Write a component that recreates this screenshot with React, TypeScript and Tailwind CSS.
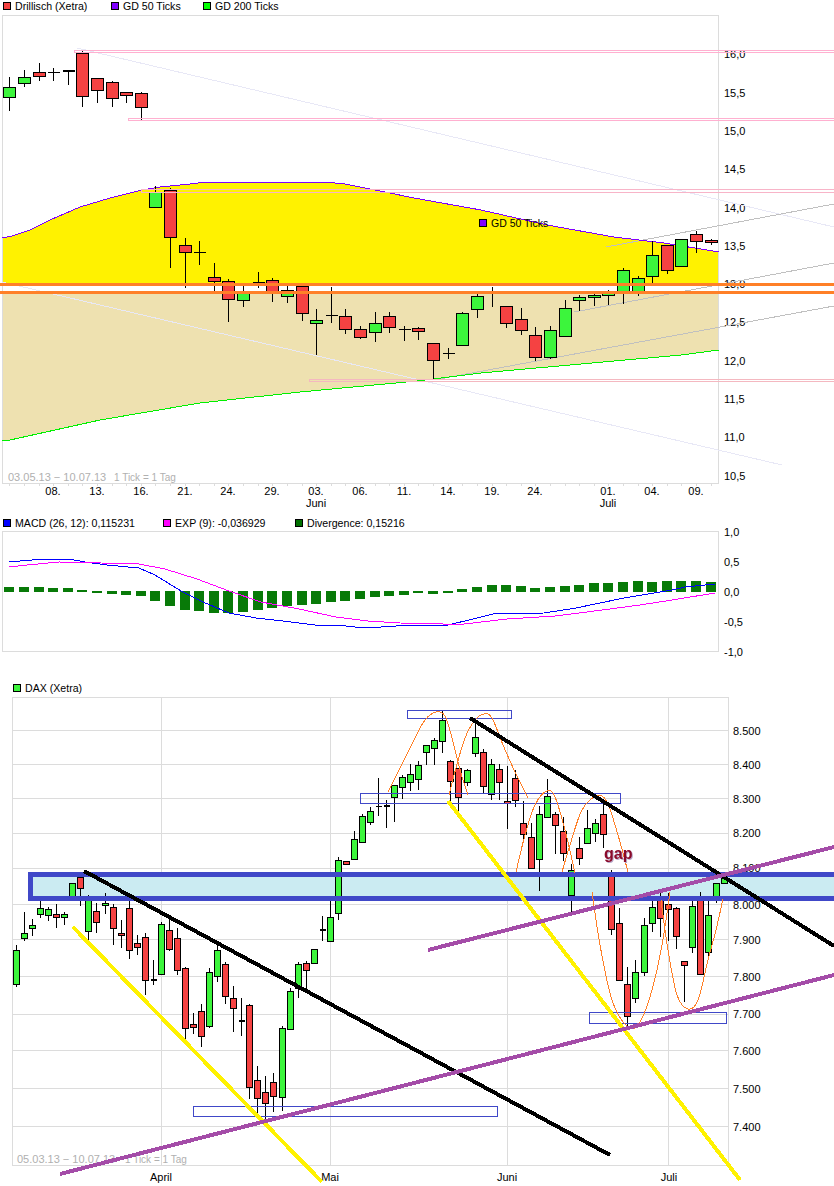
type Candle = [number, number, number, number, number, "r" | "g" | "d" | "t"];

const RED = "#f54242";
const GREEN = "#3cf53c";
const BLUE = "#4048c8";
const PURPLE = "#a44ca8";
const GRID = "#dcdcdc";

// x, high, body top, body bottom, low, kind
const drillisch: Candle[] = [
  [9, 77, 87, 97, 111, "g"], [24, 70, 77, 83, 87, "g"], [39, 63, 72, 76, 81, "r"], [53, 68, 72, 72, 81, "d"],
  [68, 70, 70, 71, 85, "t"], [82, 51, 53, 96, 107, "r"], [97, 78, 78, 90, 103, "r"], [112, 81, 82, 98, 107, "r"],
  [126, 92, 92, 95, 103, "r"], [141, 92, 93, 107, 120, "r"], [155, 186, 192, 207, 207, "g"], [170, 188, 190, 237, 268, "r"],
  [185, 238, 245, 252, 288, "r"], [199, 241, 252, 252, 265, "d"], [214, 263, 277, 281, 291, "r"], [228, 279, 281, 299, 322, "r"],
  [243, 286, 292, 300, 307, "g"], [258, 272, 282, 282, 288, "d"], [272, 278, 280, 293, 302, "r"], [287, 283, 290, 296, 303, "g"],
  [302, 285, 286, 313, 321, "r"], [316, 309, 320, 323, 355, "g"], [331, 287, 315, 315, 323, "d"], [345, 309, 316, 329, 334, "r"],
  [360, 326, 329, 337, 339, "r"], [375, 312, 323, 332, 342, "g"], [389, 312, 316, 327, 333, "r"], [404, 326, 329, 329, 341, "d"],
  [418, 327, 328, 331, 340, "r"], [433, 343, 343, 360, 380, "r"], [448, 348, 353, 353, 359, "d"], [462, 312, 313, 345, 345, "g"],
  [477, 294, 296, 309, 318, "g"], [492, 287, 292, 292, 307, "d"], [506, 306, 306, 323, 328, "r"], [521, 308, 319, 330, 335, "r"],
  [535, 327, 335, 357, 361, "r"], [550, 326, 330, 357, 359, "g"], [565, 300, 308, 336, 336, "g"], [579, 295, 297, 300, 311, "g"],
  [594, 293, 295, 297, 306, "g"], [608, 290, 292, 295, 305, "g"], [623, 268, 270, 292, 304, "g"], [638, 276, 278, 292, 296, "g"],
  [652, 241, 255, 276, 283, "g"], [667, 245, 245, 270, 274, "r"], [681, 239, 239, 266, 266, "g"], [696, 231, 234, 241, 253, "r"],
  [711, 239, 240, 242, 245, "r"],
];

const dax: Candle[] = [
  [16, 945, 950, 984, 987, "g"], [24, 912, 933, 938, 941, "g"], [32, 919, 925, 928, 936, "g"], [40, 900, 908, 914, 918, "g"],
  [48, 907, 909, 915, 921, "g"], [56, 904, 914, 917, 928, "r"], [64, 912, 914, 917, 925, "g"], [72, 883, 883, 898, 901, "g"],
  [80, 877, 877, 888, 906, "r"], [88, 895, 899, 931, 940, "g"], [96, 903, 911, 922, 933, "r"], [105, 893, 903, 905, 914, "g"],
  [113, 904, 907, 928, 945, "r"], [121, 920, 933, 935, 948, "r"], [129, 897, 908, 950, 959, "r"], [137, 935, 943, 947, 955, "r"],
  [145, 933, 937, 980, 995, "r"], [153, 960, 979, 979, 985, "t"], [161, 922, 924, 974, 974, "g"], [169, 919, 930, 949, 951, "r"],
  [177, 928, 938, 970, 975, "r"], [185, 967, 968, 1028, 1039, "r"], [193, 1013, 1024, 1027, 1034, "r"], [201, 1004, 1011, 1036, 1047, "r"],
  [209, 968, 972, 1026, 1028, "g"], [217, 943, 950, 976, 982, "g"], [225, 962, 964, 996, 1004, "r"], [233, 986, 998, 1008, 1032, "r"],
  [241, 998, 1020, 1020, 1036, "t"], [249, 1004, 1005, 1087, 1099, "r"], [257, 1066, 1080, 1098, 1113, "r"], [265, 1076, 1092, 1103, 1119, "r"],
  [273, 1073, 1082, 1096, 1112, "r"], [282, 1026, 1028, 1097, 1111, "g"], [290, 988, 991, 1029, 1029, "g"], [298, 962, 964, 988, 998, "g"],
  [306, 961, 963, 970, 989, "r"], [314, 949, 949, 963, 963, "g"], [322, 916, 929, 929, 941, "t"], [330, 900, 917, 941, 941, "g"],
  [338, 857, 860, 913, 920, "g"], [346, 861, 861, 864, 864, "r"], [354, 831, 839, 859, 859, "g"], [362, 814, 816, 842, 842, "g"],
  [370, 807, 811, 822, 825, "g"], [378, 778, 806, 806, 816, "d"], [386, 800, 805, 805, 828, "t"], [394, 785, 785, 797, 822, "g"],
  [402, 775, 777, 787, 799, "g"], [410, 764, 774, 782, 791, "g"], [418, 761, 765, 779, 790, "g"], [426, 745, 745, 752, 765, "g"],
  [434, 738, 740, 748, 765, "g"], [442, 711, 720, 741, 753, "g"], [450, 760, 761, 781, 802, "r"], [458, 768, 768, 797, 812, "r"],
  [467, 769, 770, 782, 786, "g"], [475, 720, 737, 753, 757, "g"], [483, 749, 752, 786, 793, "r"], [491, 759, 764, 794, 800, "g"],
  [499, 764, 769, 782, 800, "r"], [507, 766, 801, 803, 829, "r"], [515, 770, 778, 800, 807, "r"], [523, 801, 823, 834, 840, "r"],
  [531, 823, 837, 868, 868, "r"], [539, 806, 814, 859, 891, "g"], [547, 779, 796, 817, 817, "g"], [555, 812, 814, 825, 854, "r"],
  [563, 817, 831, 853, 861, "r"], [571, 864, 870, 895, 912, "g"], [579, 837, 848, 858, 865, "r"], [587, 810, 828, 843, 844, "g"],
  [595, 819, 823, 833, 842, "g"], [603, 803, 814, 834, 848, "r"], [611, 870, 872, 929, 935, "r"], [619, 908, 923, 980, 980, "r"],
  [627, 967, 984, 1016, 1027, "r"], [635, 960, 972, 998, 1003, "g"], [644, 918, 925, 972, 976, "g"], [652, 898, 907, 923, 932, "g"],
  [660, 893, 900, 918, 937, "r"], [668, 893, 904, 909, 941, "r"], [676, 907, 908, 936, 949, "r"], [684, 961, 961, 965, 1002, "r"],
  [692, 900, 906, 947, 953, "g"], [700, 892, 900, 974, 974, "r"], [708, 900, 915, 952, 958, "g"], [716, 883, 883, 896, 903, "g"],
  [724, 877, 878, 883, 883, "g"],
];

// tops of the divergence bars, in 1/3 px above y=510
const divergence = [
  231, 231, 231, 233, 233, 240, 248, 251, 255, 258, 272, 288, 300, 303, 309, 309, 306, 300, 293, 288, 285, 281, 275, 272, 267,
  261, 258, 255, 249, 251, 248, 237, 231, 225, 225, 228, 233, 231, 228, 225, 220, 218, 216, 213, 216, 213, 213, 213, 216,
];

const macdLine = [
  [9, 562], [32, 560], [48, 559], [69, 559], [85, 562], [107, 565], [139, 568], [155, 575], [181, 591], [203, 602], [229, 613],
  [256, 618], [283, 621], [315, 625], [336, 625], [355, 627], [381, 627], [411, 625], [448, 625], [469, 620], [493, 614], [544, 613],
  [576, 608], [624, 598], [672, 590], [685, 587], [715, 584],
];
const expLine = [
  [9, 567], [27, 565], [59, 562], [101, 563], [139, 564], [165, 569], [197, 579], [229, 591], [261, 602], [299, 609], [336, 617],
  [368, 621], [400, 623], [443, 624], [464, 624], [507, 619], [555, 616], [587, 612], [640, 605], [672, 600], [715, 593],
];

const gd50 = [
  [2, 238], [12, 236], [30, 230], [50, 220], [80, 207], [110, 198], [142, 190], [160, 187], [190, 184], [207, 182], [325, 182],
  [345, 184], [380, 191], [414, 198], [481, 210], [547, 225], [614, 237], [664, 243], [719, 252],
];
const gd200 = [
  [2, 441], [10, 440], [100, 420], [200, 403], [300, 392], [417, 381], [481, 373], [581, 364], [681, 355], [719, 350],
];

const arcs = [
  [[388, 792], [400, 768], [415, 738], [425, 720], [436, 712], [445, 716], [452, 738], [460, 770], [468, 795]],
  [[449, 795], [456, 768], [465, 738], [475, 720], [484, 714], [492, 718], [503, 745], [515, 772], [528, 798]],
  [[516, 872], [525, 835], [535, 805], [547, 791], [555, 797], [565, 830], [575, 873]],
  [[562, 872], [570, 845], [582, 810], [597, 796], [607, 802], [618, 835], [628, 872]],
  [[592, 892], [600, 945], [612, 1000], [628, 1027], [640, 1022], [652, 990], [662, 945], [670, 892]],
  [[661, 900], [668, 950], [677, 995], [688, 1009], [698, 1000], [708, 960], [716, 930], [723, 899]],
];

function pts(list: number[][]) {
  return list.map((p) => p.join(",")).join(" ");
}

// catmull-rom through the points, good enough for the hand drawn arcs
function smooth(p: number[][]) {
  let d = `M${p[0][0]} ${p[0][1]}`;
  for (let i = 0; i < p.length - 1; i++) {
    const a = p[Math.max(i - 1, 0)];
    const b = p[i];
    const c = p[i + 1];
    const e = p[Math.min(i + 2, p.length - 1)];
    d += ` C${b[0] + (c[0] - a[0]) / 6} ${b[1] + (c[1] - a[1]) / 6} ${c[0] - (e[0] - b[0]) / 6} ${c[1] - (e[1] - b[1]) / 6} ${c[0]} ${c[1]}`;
  }
  return d;
}

function Stick({ c, half }: { c: Candle; half: number }) {
  const [x, hi, top, bot, lo, kind] = c;
  const px = x + 0.5;
  if (kind === "d" || kind === "t") {
    return (
      <g stroke="#000">
        <line x1={px} x2={px} y1={hi} y2={lo} />
        <line x1={px - half} x2={px + half} y1={top + 0.5} y2={top + 0.5} strokeWidth={kind === "t" ? 2 : 1} />
      </g>
    );
  }
  return (
    <g stroke="#000">
      <line x1={px} x2={px} y1={hi} y2={lo} />
      <rect x={px - half} y={top + 0.5} width={half * 2} height={bot - top} fill={kind === "r" ? RED : GREEN} />
    </g>
  );
}

function Label({ color, text, className }: { color: string; text: string; className?: string }) {
  return (
    <div className={`flex items-center gap-[4px] ${className ?? ""}`}>
      <span className="block h-[8px] w-[8px] border border-black" style={{ backgroundColor: color }} />
      <span>{text}</span>
    </div>
  );
}

function AxisText({ x, y, children, anchor }: { x: number; y: number; children: React.ReactNode; anchor?: "middle" }) {
  return (
    <text x={x} y={y + 4} textAnchor={anchor} fill="#000" stroke="none" fontSize="11">
      {children}
    </text>
  );
}

export default function App() {
  const yellow = `3,283 3,238 ${pts(gd50.slice(1, -1))} 718,252 718,283`;
  const beige = `3,292 718,292 718,350 ${pts(gd200.slice(1, -1).reverse())} 3,441`;

  return (
    <div className="h-[1186px] w-[834px] overflow-hidden bg-white font-['Liberation_Sans',sans-serif] text-[10.6px] leading-[12px] text-black">
      <div className="flex h-[15px] items-start pl-[3px]">
        <Label color={RED} text="Drillisch (Xetra)" className="w-[108px]" />
        <Label color="#8000ff" text="GD 50 Ticks" className="w-[92px]" />
        <Label color="#00ff00" text="GD 200 Ticks" />
      </div>

      <svg width="834" height="500" viewBox="0 15 834 500" className="block" shapeRendering="crispEdges" fill="none">
        <polygon points={yellow} fill="#fff200" />
        <polygon points={beige} fill="#eee1b0" />
        <path d="M2.5 15.5H718.5V483.5H2.5Z" stroke={GRID} />
        {drillisch.map((c) => (
          <line key={c[0]} x1={c[0] + 0.5} x2={c[0] + 0.5} y1="484" y2="486" stroke={GRID} />
        ))}

        {[
          ["16,0", 54], ["15,5", 93], ["15,0", 131], ["14,5", 169], ["14,0", 208], ["13,5", 246],
          ["13,0", 284], ["12,5", 322], ["12,0", 361], ["11,5", 399], ["11,0", 437], ["10,5", 476],
        ].map(([t, y]) => (
          <AxisText key={t} x={724} y={y as number}>{t}</AxisText>
        ))}

        {[
          ["08.", 53], ["13.", 97], ["16.", 141], ["21.", 185], ["24.", 228], ["29.", 272], ["03.", 316], ["06.", 360],
          ["11.", 404], ["14.", 448], ["19.", 492], ["24.", 535], ["01.", 608], ["04.", 652], ["09.", 696],
        ].map(([t, x]) => (
          <AxisText key={x} x={x as number} y={491} anchor="middle">{t}</AxisText>
        ))}
        <AxisText x={316} y={503} anchor="middle">Juni</AxisText>
        <AxisText x={608} y={503} anchor="middle">Juli</AxisText>
        <text x="8" y="481" fontSize="11" fill="#b0b0b0" stroke="none">
          03.05.13 − 10.07.13
          <tspan x="114" fontSize="10">1 Tick = 1 Tag</tspan>
        </text>

        {/* trend lines */}
        <line x1="77" y1="48" x2="834" y2="227" stroke="#e8e8f6" />
        <line x1="2" y1="282" x2="782" y2="465" stroke="#e8e8f6" />
        <line x1="606" y1="247" x2="834" y2="204" stroke="#c0c0c0" />
        <line x1="574" y1="312" x2="834" y2="263" stroke="#c0c0c0" />
        <line x1="434" y1="380" x2="834" y2="306" stroke="#c0c0c0" />

        <polyline points={pts(gd50)} stroke="#8000ff" />
        <polyline points={pts(gd200)} stroke="#00f000" />

        {drillisch.map((c) => (
          <Stick key={c[0]} c={c} half={6} />
        ))}

        <rect x="74.5" y="50.5" width="780" height="2" stroke="#ffb0d0" />
        <rect x="128.5" y="118.5" width="720" height="2" stroke="#ffb0d0" />
        <rect x="141.5" y="189.5" width="720" height="3" stroke="#f8b4c8" />
        <rect x="309.5" y="379.5" width="540" height="2" stroke="#f4b8c0" />

        <rect x="479.5" y="219.5" width="7" height="7" fill="#8000ff" stroke="#000" />
        <text x="491" y="227" fontSize="10.5" fill="#000" stroke="none">GD 50 Ticks</text>

        <rect x="0" y="283" width="834" height="3" fill="#ff8028" />
        <rect x="0" y="291" width="834" height="3" fill="#ff8028" />
      </svg>

      <div className="flex h-[15px] items-center pl-[3px]">
        <Label color="#0000ff" text="MACD (26, 12): 0,115231" className="w-[160px]" />
        <Label color="#ff00ff" text="EXP (9): -0,036929" className="w-[132px]" />
        <Label color="#007000" text="Divergence: 0,15216" />
      </div>

      <svg width="834" height="151" viewBox="0 530 834 151" className="block overflow-visible" shapeRendering="crispEdges" fill="none">
        <path d="M2.5 531.5H718.5V651.5H2.5Z" stroke={GRID} />
        {divergence.map((z, i) => {
          const y = 510 + z / 3;
          const x = drillisch[i][0] - 5;
          return z < 243 ? (
            <rect key={i} x={x} y={y} width="10" height={592 - y} fill="#087a08" />
          ) : (
            <rect key={i} x={x} y="591" width="10" height={y - 591} fill="#087a08" />
          );
        })}
        <polyline points={pts(macdLine)} stroke="#0000ff" />
        <polyline points={pts(expLine)} stroke="#ff00ff" />
        {[
          ["1,0", 532], ["0,5", 562], ["0,0", 592], ["-0,5", 622], ["-1,0", 652],
        ].map(([t, y]) => (
          <AxisText key={t} x={724} y={y as number}>{t}</AxisText>
        ))}
      </svg>

      <div className="flex h-[16px] items-start pl-[13px] pt-px">
        <Label color={GREEN} text="DAX (Xetra)" />
      </div>

      <svg width="834" height="489" viewBox="0 697 834 489" className="block" shapeRendering="crispEdges" fill="none">
        {[730, 764, 798, 833, 868, 904, 939, 976, 1014, 1050, 1088, 1126].map((y) => (
          <line key={y} x1="13" x2="728" y1={y + 0.5} y2={y + 0.5} stroke={GRID} />
        ))}
        {[161, 330, 507, 668].map((x) => (
          <line key={x} x1={x + 0.5} x2={x + 0.5} y1="697" y2="1165" stroke={GRID} />
        ))}
        <path d="M12.5 697.5H728.5V1165.5H12.5Z" stroke={GRID} />

        {[
          ["8.500", 731], ["8.400", 765], ["8.300", 799], ["8.200", 833], ["8.100", 868], ["8.000", 905],
          ["7.900", 940], ["7.800", 977], ["7.700", 1014], ["7.600", 1051], ["7.500", 1089], ["7.400", 1127],
        ].map(([t, y]) => (
          <AxisText key={t} x={733} y={y as number}>{t}</AxisText>
        ))}
        <AxisText x={161} y={1177} anchor="middle">April</AxisText>
        <AxisText x={330} y={1177} anchor="middle">Mai</AxisText>
        <AxisText x={507} y={1177} anchor="middle">Juni</AxisText>
        <AxisText x={669} y={1177} anchor="middle">Juli</AxisText>
        <text x="17" y="1163" fontSize="11" fill="#b0b0b0" stroke="none">
          05.03.13 − 10.07.13
          <tspan x="125" fontSize="10">1 Tick = 1 Tag</tspan>
        </text>

        {/* band fill sits under the candles, its stripes over them */}
        <rect x="28" y="872" width="806" height="29" fill="#cbebf2" />

        {dax.map((c) => (
          <Stick key={c[0]} c={c} half={3} />
        ))}

        <rect x="28" y="872" width="806" height="5" fill={BLUE} />
        <rect x="28" y="896" width="806" height="5" fill={BLUE} />
        <rect x="28" y="872" width="5" height="29" fill={BLUE} />

        <rect x="407.5" y="710.5" width="104" height="8" stroke={BLUE} />
        <rect x="360.5" y="793.5" width="260" height="10" stroke={BLUE} />
        <rect x="589.5" y="1012.5" width="137" height="11" stroke={BLUE} />
        <rect x="193.5" y="1106.5" width="304" height="10" stroke={BLUE} />

        {arcs.map((a, i) => (
          <path key={i} d={smooth(a)} stroke="#ff8028" />
        ))}

        <line x1="84" y1="871" x2="610" y2="1155" stroke="#000" strokeWidth="4" />
        <line x1="470" y1="718" x2="834" y2="946" stroke="#000" strokeWidth="4" />
        <line x1="73" y1="927" x2="322" y2="1182" stroke="#fff200" strokeWidth="4" />
        <line x1="448" y1="801" x2="740" y2="1180" stroke="#fff200" strokeWidth="4" />
        <line x1="60" y1="1174" x2="834" y2="975" stroke={PURPLE} strokeWidth="4" />
        <line x1="428" y1="950" x2="834" y2="847" stroke={PURPLE} strokeWidth="4" />

        <text x="604" y="859" fontSize="16" fontWeight="bold" fill="#8b0a2a" stroke="none" shapeRendering="auto" className="[filter:drop-shadow(1px_1px_0_#b8a8c8)]">gap</text>
      </svg>
    </div>
  );
}
